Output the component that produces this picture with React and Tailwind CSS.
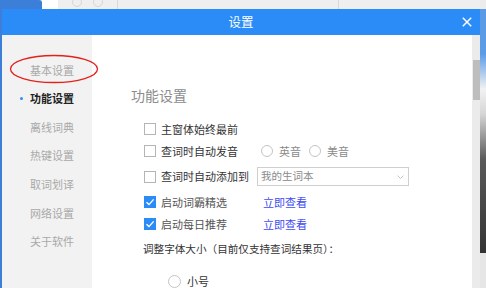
import React from 'react';

const menu = ['基本设置', '功能设置', '离线词典', '热键设置', '取词划译', '网络设置', '关于软件'];

const Checkbox = ({ checked }) =>
  checked ? (
    <span className="w-[12px] h-[12px] bg-[#2b8cf7] flex items-center justify-center shrink-0">
      <svg width="10" height="10" viewBox="0 0 10 10">
        <path d="M1.5 5.2 L4 7.6 L8.6 2.4" fill="none" stroke="#fff" strokeWidth="1.4" />
      </svg>
    </span>
  ) : (
    <span className="w-[12px] h-[12px] border border-[#b5b5b5] bg-white shrink-0" />
  );

const Radio = ({ label }) => (
  <span className="flex items-center">
    <span className="w-[12px] h-[12px] rounded-full border border-[#c4c4c4] bg-white" />
    <span className="ml-[6px] text-[#8a8a8a]">{label}</span>
  </span>
);

const Row = ({ checked, label, children, h = 'h-[22px]' }) => (
  <div className={`flex items-center pl-[52px] ${h}`}>
    <Checkbox checked={checked} />
    <span className={`ml-[5px] w-[96px] ${checked ? 'text-[#555]' : 'text-[#333]'}`}>{label}</span>
    {children}
  </div>
);

const App = () => {
  return (
    <div
      className="w-[486px] h-[288px] relative overflow-hidden flex bg-[#ececec] text-[11px] leading-none"
      style={{ fontFamily: '"Noto Sans CJK SC", "Noto Sans", sans-serif' }}
    >
      <div className="w-[480px] flex flex-col">
        {/* browser strip behind */}
        <div className="h-[9px] flex shrink-0">
          <div className="w-[42px] bg-[#3b7fd8] rounded-tr-[3px]" />
          <div className="w-[16px] bg-white" />
          <div className="flex-1 bg-[#efefef] flex items-end">
            <span className="ml-[14px] mb-[2px] w-[10px] h-[10px] rounded-full border border-[#d6d6d6]" />
            <span className="ml-[11px] mb-[2px] w-[10px] h-[10px] rounded-full border border-[#d6d6d6]" />
            <span className="ml-[14px] w-px h-[9px] bg-[#dadada]" />
            <span className="ml-[220px] w-px h-[9px] bg-[#dadada]" />
          </div>
        </div>
        <div className="flex flex-1">
          <div className="w-[2px] bg-[#3b7fd8]" />
          {/* dialog */}
          <div className="w-[478px] flex flex-col">
            <div className="h-[26px] bg-[#2b8cf7] grid grid-cols-[1fr_auto_1fr] items-center">
              <span />
              <span className="text-white text-[12.5px]">设置</span>
              <span className="flex justify-end pr-[8px]">
                <svg width="10" height="10" viewBox="0 0 10 10">
                  <path d="M0.8 0.8 L9.2 9.2 M9.2 0.8 L0.8 9.2" stroke="#fff" strokeWidth="1.5" />
                </svg>
              </span>
            </div>
            <div className="flex flex-1">
              {/* sidebar */}
              <div className="w-[90px] bg-[#f2f2f2] pt-[20.7px] flex flex-col">
                {menu.map((m, i) => (
                  <div key={m} className="h-[28.67px] flex items-center pl-[18px]">
                    <span className={`w-[3px] h-[3px] rounded-full ${i === 1 ? 'bg-[#2b8cf7]' : ''}`} />
                    <span
                      className={`ml-[7px] ${i === 1 ? 'text-[#222] font-bold' : 'text-[#a9a9a9]'}`}
                    >
                      {m}
                    </span>
                  </div>
                ))}
              </div>
              {/* content */}
              <div className="w-[380px] bg-white flex flex-col">
                <div className="mt-[50px] pl-[39px] h-[20px] flex items-center">
                  <span className="text-[14px] text-[#8c8c8c]">功能设置</span>
                </div>
                <div className="h-[13px]" />
                <Row label="主窗体始终最前" />
                <Row label="查词时自动发音">
                  <span className="ml-[4px] flex items-center gap-[8px]">
                    <Radio label="英音" />
                    <Radio label="美音" />
                  </span>
                </Row>
                <Row label="查词时自动添加到" h="h-[29px]">
                  <div className="w-[152px] h-[19px] border border-[#cfcfcf] flex items-center justify-between pl-[3px] pr-[4px]">
                    <span className="text-[10.5px] text-[#8a8a8a]">我的生词本</span>
                    <svg width="7" height="4" viewBox="0 0 7 4">
                      <path d="M0.5 0.5 L3.5 3.5 L6.5 0.5" fill="none" stroke="#c8c8c8" strokeWidth="1" />
                    </svg>
                  </div>
                </Row>
                <Row checked label="启动词霸精选">
                  <span className="ml-[6px] text-[#3d4cf0]">立即查看</span>
                </Row>
                <Row checked label="启动每日推荐">
                  <span className="ml-[6px] text-[#3d4cf0]">立即查看</span>
                </Row>
                <div className="h-[22px] mt-[3px] flex items-center pl-[51px] text-[#333] text-[10.6px]">
                  调整字体大小（目前仅支持查词结果页）：
                </div>
                <div className="h-[22px] mt-[10px] flex items-center pl-[76px]">
                  <span className="w-[13px] h-[13px] rounded-full border border-[#c4c4c4]" />
                  <span className="ml-[6px] text-[#333]">小号</span>
                </div>
              </div>
              {/* scrollbar */}
              <div className="w-[8px] bg-[#ebebeb] pt-[25px] pl-[1px]">
                <div className="h-[40px] bg-[#bdbdbd]" />
              </div>
            </div>
          </div>
        </div>
      </div>
      {/* window edge behind on the right */}
      <div className="w-[6px] flex flex-col">
        <div className="h-[9px] bg-[#ececec]" />
        <div className="h-[244px] bg-[linear-gradient(to_bottom,#5b9be6_0px,#5b9be6_45px,#f2f2f2_80px,#d6d6d6_105px,#5a5a5a_150px,#333_244px)]" />
        <div className="flex-1 bg-[#e6e6e6]" />
      </div>
      {/* red annotation ellipse */}
      <svg className="absolute left-[9px] top-[54px]" width="90" height="30" viewBox="0 0 90 30">
        <ellipse cx="45" cy="15" rx="43.5" ry="13.5" fill="none" stroke="#e3211c" strokeWidth="1.3" />
      </svg>
    </div>
  );
};

export default App;
